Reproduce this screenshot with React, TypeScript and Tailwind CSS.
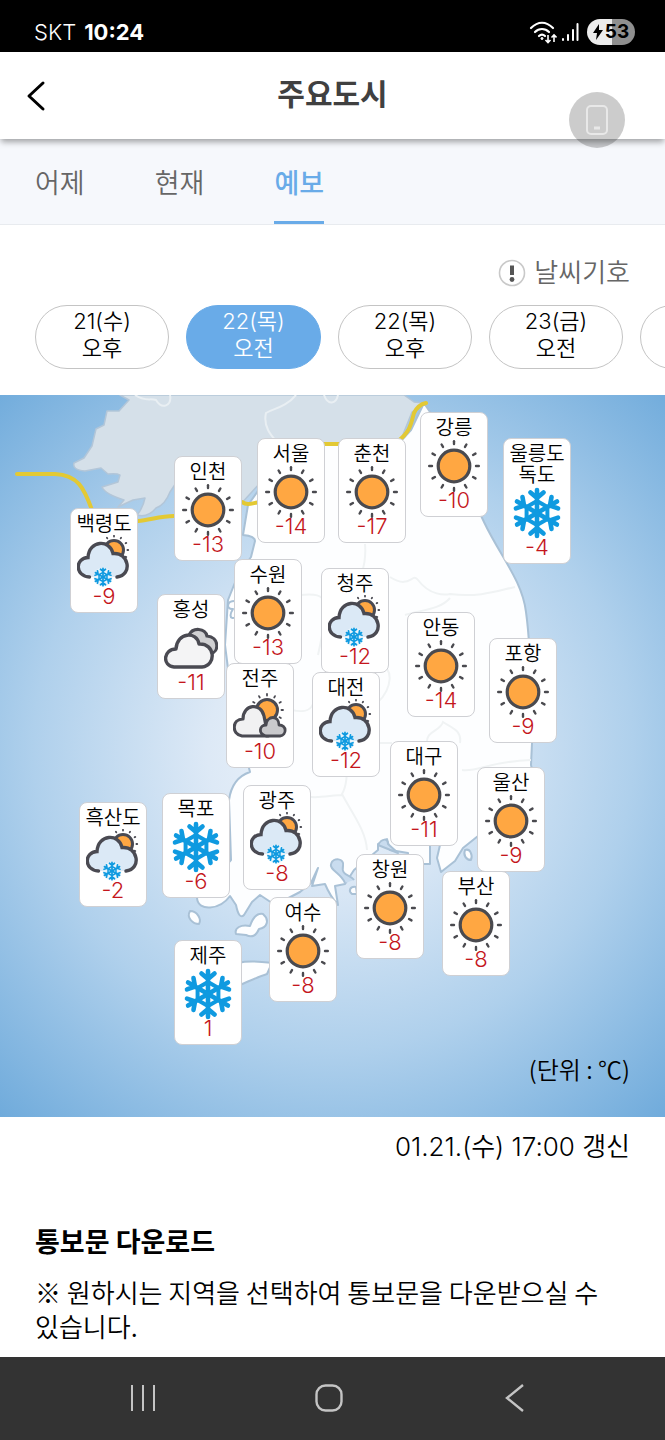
import React, { useState } from "react";

type Weather = "sun" | "snow" | "cloudSnow" | "cloudy" | "partly";

interface City {
  name: string[];
  x: number;
  y: number;
  temp: number;
  weather: Weather;
}

// x / y are measured on a 665 x 722 map
const MAP_WIDTH = 665;
const MAP_HEIGHT = 722;

const cities: City[] = [
  { name: ["인천"], x: 174, y: 61, temp: -13, weather: "sun" },
  { name: ["서울"], x: 257, y: 43, temp: -14, weather: "sun" },
  { name: ["춘천"], x: 338, y: 43, temp: -17, weather: "sun" },
  { name: ["강릉"], x: 420, y: 17, temp: -10, weather: "sun" },
  { name: ["울릉도", "독도"], x: 503, y: 43, temp: -4, weather: "snow" },
  { name: ["백령도"], x: 70, y: 113, temp: -9, weather: "cloudSnow" },
  { name: ["홍성"], x: 157, y: 199, temp: -11, weather: "cloudy" },
  { name: ["수원"], x: 234, y: 164, temp: -13, weather: "sun" },
  { name: ["청주"], x: 321, y: 173, temp: -12, weather: "cloudSnow" },
  { name: ["안동"], x: 407, y: 217, temp: -14, weather: "sun" },
  { name: ["포항"], x: 489, y: 243, temp: -9, weather: "sun" },
  { name: ["전주"], x: 226, y: 268, temp: -10, weather: "partly" },
  { name: ["대전"], x: 312, y: 277, temp: -12, weather: "cloudSnow" },
  { name: ["대구"], x: 390, y: 346, temp: -11, weather: "sun" },
  { name: ["울산"], x: 477, y: 372, temp: -9, weather: "sun" },
  { name: ["흑산도"], x: 79, y: 407, temp: -2, weather: "cloudSnow" },
  { name: ["목포"], x: 162, y: 398, temp: -6, weather: "snow" },
  { name: ["광주"], x: 243, y: 390, temp: -8, weather: "cloudSnow" },
  { name: ["창원"], x: 356, y: 459, temp: -8, weather: "sun" },
  { name: ["부산"], x: 442, y: 476, temp: -8, weather: "sun" },
  { name: ["여수"], x: 269, y: 502, temp: -8, weather: "sun" },
  { name: ["제주"], x: 174, y: 545, temp: 1, weather: "snow" },
];

const tabs = ["어제", "현재", "예보"];

// the last one is still scrolled out of view
const periods = [
  ["21(수)", "오후"],
  ["22(목)", "오전"],
  ["22(목)", "오후"],
  ["23(금)", "오전"],
  ["", ""],
];

const rays = [0, 30, 60, 90, 120, 150, 180, 210, 240, 270, 300, 330];
const arms = [0, 60, 120, 180, 240, 300];

function Flake() {
  return (
    <g stroke="#0f9ae0" strokeWidth="4.6" strokeLinecap="round" strokeLinejoin="round" fill="none">
      {arms.map((a) => (
        <path key={a} d="M0 0V-23M-6.5 -20.5L0 -15L6.5 -20.5" transform={`rotate(${a})`} />
      ))}
      <path d="M0 -12L10.4 -6V6L0 12L-10.4 6V-6Z" strokeWidth="4" />
    </g>
  );
}

function SunSmall() {
  return (
    <g>
      <circle cx="38" cy="15" r="9.5" fill="#ffa742" stroke="#4a4a52" strokeWidth="3" />
      <g stroke="#4a4a52" strokeWidth="1.8" strokeLinecap="round">
        {rays.map((a) => (
          <path key={a} d="M38 1.6V0.8" transform={`rotate(${a} 38 15)`} />
        ))}
      </g>
    </g>
  );
}

function WeatherIcon({ type }: { type: Weather }) {
  if (type === "sun") {
    return (
      <svg viewBox="0 0 54 54" className="size-[54px]" aria-hidden="true">
        <circle cx="27" cy="27" r="15.8" fill="#ffa742" stroke="#4a4a4f" strokeWidth="3.2" />
        <g stroke="#4a4a4f" strokeWidth="2.4" strokeLinecap="round">
          {rays.map((a) => (
            <path key={a} d="M27 5V2.2" transform={`rotate(${a} 27 27)`} />
          ))}
        </g>
      </svg>
    );
  }
  if (type === "snow") {
    return (
      <svg viewBox="-27 -27 54 54" className="size-[54px]" aria-hidden="true">
        <Flake />
      </svg>
    );
  }
  if (type === "cloudSnow") {
    return (
      <svg viewBox="1 0 54 54" className="size-[54px]" aria-hidden="true">
        <SunSmall />
        <path
          d="M14 42C-1 41 -1 22.5 12 22.5C13 5 34 4 37 18.5C53 17 57 40 41 42Z"
          fill="#dbe9f6"
        />
        <path
          d="M13.5 42C-1.5 41 -1 23 12 22.5C13 5 34 4 37 18.5C53 17 57 40 41 42"
          fill="none"
          stroke="#4a4a52"
          strokeWidth="3.4"
          strokeLinecap="round"
        />
        <g transform="translate(27 42) scale(.38)">
          <circle r="25" fill="#e9f4fb" />
          <Flake />
        </g>
      </svg>
    );
  }
  if (type === "cloudy") {
    return (
      <svg viewBox="0 -1 54 54" className="size-[54px]" aria-hidden="true">
        <path
          d="M25 13C29 5 41 6 43 14C55 15 56 30 46 32L30 30Z"
          fill="#d0d0d2"
          stroke="#4a4a52"
          strokeWidth="3.2"
        />
        <path
          d="M10 45C-2 44 -1 27 12 27C13 10 33 9 35 22C51 21 53 43 38 45Z"
          fill="#f4f4f5"
          stroke="#4a4a52"
          strokeWidth="3.4"
          strokeLinejoin="round"
        />
      </svg>
    );
  }
  return (
    <svg viewBox="0 -1 54 54" className="size-[54px]" aria-hidden="true">
      <circle cx="34" cy="19" r="10.5" fill="#ffa742" stroke="#4a4a52" strokeWidth="3" />
      <g stroke="#4a4a52" strokeWidth="1.8" strokeLinecap="round">
        {rays.map((a) => (
          <path key={a} d="M34 4.5V3" transform={`rotate(${a} 34 19)`} />
        ))}
      </g>
      <path
        d="M9 45C-2 43 -1 28 10 28C10 13 28 11 31 25L35 45Z"
        fill="#f1f1f2"
        stroke="#4a4a52"
        strokeWidth="3.2"
        strokeLinejoin="round"
      />
      <path
        d="M33 45C25 43 26 34 33 34C34 24 46 24 46 34C54 34 54 44 47 45Z"
        fill="#c9c9cc"
        stroke="#4a4a52"
        strokeWidth="2.8"
        strokeLinejoin="round"
      />
    </svg>
  );
}

function CityCard({ city }: { city: City }) {
  return (
    <li
      className="absolute flex w-[68px] flex-col items-center rounded-lg border border-[#cfd0d4] bg-white pt-[5px] pb-[5px]"
      style={{
        left: `${(city.x / MAP_WIDTH) * 100}%`,
        top: `${(city.y / MAP_HEIGHT) * 100}%`,
      }}
    >
      {city.name.map((line) => (
        <span key={line} className="text-[20px] leading-[21px] whitespace-nowrap text-black">
          {line}
        </span>
      ))}
      <WeatherIcon type={city.weather} />
      <span className="-mt-1 text-[22px] leading-[22px] text-[#c4161c]">{city.temp}</span>
    </li>
  );
}

function KoreaMap() {
  return (
    <svg
      viewBox="0 395 665 722"
      preserveAspectRatio="none"
      className="absolute inset-0 h-full w-full"
      aria-hidden="true"
    >
      <defs>
        <radialGradient id="sea" gradientUnits="userSpaceOnUse" cx="333" cy="750" r="500">
          <stop offset="0" stopColor="#eef5fb" />
          <stop offset="0.25" stopColor="#dde9f6" />
          <stop offset="0.6" stopColor="#afd0ec" />
          <stop offset="1" stopColor="#6eaadb" />
        </radialGradient>
      </defs>
      <rect y="395" width="665" height="722" fill="url(#sea)" />
      {/* north */}
      <path
        d="M120 395L129 400L119 411L107 411L104 425L96 429L92 446L84 458L74 463Q72 470 85 471L101 468L108 474Q117 473 120 475L118 482L102 487Q105 494 124 500L118 507L133 500L145 498Q143 508 137 515Q148 518 156 508Q165 505 170 492L178 480L240 505L290 450L400 442L412 412L424 403L414 402L404 395Z"
        fill="#d5e0e9"
        stroke="#b3c6d8"
        strokeWidth="1.5"
        strokeLinejoin="round"
      />
      <path
        d="M135 395C145 402 150 398 156 400C162 410 172 406 170 395M296 395C285 408 274 408 266 413C262 430 276 440 282 448M324 395C328 406 336 404 338 395"
        fill="none"
        stroke="#e9eff3"
        strokeWidth="2"
      />
      {/* south */}
      <path
        d="M424 403L411 430L400 442L290 446L248 505L243 535Q255 536 255 541L251 557L238 575L228 600L225 645L232 700L250 772Q232 778 229 800L231 860L197 898C198 912 220 910 230 896L236 905Q239 920 244 915L252 902L260 895L275 905L300 892L311 883L318 868L312 886L325 884Q330 896 338 905L335 886L345 884L354 870L378 850V844L387 839L390 850L408 853V864H430V845H440L437 858L441 872L455 861L463 848L478 836L540 800L531 765L534 700C529 660 530 640 526 612C522 580 500 556 484 522L455 460L432 415Z"
        fill="#fdfeff"
        stroke="#a9c1d6"
        strokeWidth="2"
        strokeLinejoin="round"
      />
      <path
        d="M345 883C341 873 329 870 331 864C333 857 345 858 343 866C341 876 350 874 354 880M378 845C382 838 388 838 388 844L398 853Z"
        fill="#c9dcef"
        stroke="#a9c1d6"
        strokeWidth="2"
        strokeLinejoin="round"
      />
      <path
        d="M390 577C410 590 412 572 418 580C430 596 445 595 450 594C480 598 500 590 515 587M450 598C440 610 420 610 405 615M365 544C366 556 364 566 362 572M427 745C425 730 440 732 443 722C452 728 462 730 460 743M372 743H392M348 742C345 760 350 780 342 794C350 810 366 830 367 850M462 770C480 772 485 762 531 760M300 595C330 592 330 600 318 655M378 665C395 665 392 690 378 702M292 710C300 712 310 712 313 704M300 795C315 800 330 795 343 795"
        fill="none"
        stroke="#f0f3f4"
        strokeWidth="2"
      />
      <g fill="#fdfeff" stroke="#a9c1d6" strokeWidth="2" strokeLinejoin="round">
        <path d="M236 601C226 600 226 610 233 609C226 620 236 620 237 614" />
        <path d="M190 911C197 911 202 919 199 924C193 924 186 918 190 911Z" />
        <path d="M236 934C234 928 241 924 250 926C253 917 257 913 263 914C270 920 267 928 259 929C256 936 252 938 246 935Z" />
        <path d="M238 963C250 960 264 962 272 963L267 974Q258 977 238 986Z" />
        <path d="M465 850C470 848 473 855 471 860C466 860 463 855 465 850Z" />
        <path d="M356 887C350 886 348 891 352 894H357Z" />
      </g>
      <path
        d="M17 474H55C78 475 84 488 92 510M138 521C150 520 160 516 174 516M242 502C248 506 252 503 260 502M322 444H340M398 441C410 432 411 424 414 413C417 407 421 404 426 403"
        fill="none"
        stroke="#e3c934"
        strokeWidth="4"
        strokeLinecap="round"
      />
    </svg>
  );
}

export default function App() {
  const [tab, setTab] = useState("예보");
  const [period, setPeriod] = useState(1);

  return (
    <div className="w-full overflow-hidden bg-white font-['Inter','Noto_Sans_CJK_KR',sans-serif] font-[350]">
      {/* Status bar */}
      <div className="flex h-[52px] items-center justify-between bg-black pt-3 pr-[30px] pl-[34px] text-white">
        <div className="flex gap-2 text-[22px] leading-7">
          <span>SKT</span>
          <span className="font-bold">10:24</span>
        </div>
        <div className="flex items-center gap-1">
          <svg viewBox="0 0 28 24" className="h-6 w-7" fill="none" stroke="white" strokeWidth="2.2" aria-hidden="true">
            <path d="M2 8C9 1 17 1 24 8M6 12C10 8 16 8 20 12M10 16C12 14 14 14 16 16" strokeLinecap="round" />
            <circle cx="13" cy="18.5" r="1" fill="white" strokeWidth="1" />
            <path d="M19 15V22M16.5 20L19 22.5L21.5 20M25 22V15M22.5 17.5L25 15L27.5 17.5" strokeWidth="1.6" />
          </svg>
          <svg viewBox="0 0 18 20" className="h-5 w-[18px]" stroke="white" strokeWidth="2" strokeLinecap="round" aria-hidden="true">
            <path d="M2 18V17M7 18V13M12 18V8M16.5 18V2" />
          </svg>
          <div className="ml-1 flex h-[26px] w-12 items-center justify-center rounded-full bg-linear-to-r from-[#ececec] from-52% to-[#8f8f8f] to-52% text-black">
            <svg viewBox="0 0 10 16" className="h-4 w-[10px]" aria-hidden="true">
              <path d="M6 0L0 9H4L3 16L10 6H6Z" />
            </svg>
            <span className="ml-[2px] text-[19px] leading-6 font-bold">53</span>
          </div>
        </div>
      </div>

      {/* Header */}
      <header className="relative z-10 flex h-[87px] items-center bg-white px-6 shadow-[0_4px_6px_-1px_rgba(0,0,0,0.35)]">
        <button type="button" aria-label="뒤로" className="flex w-6 items-center">
          <svg viewBox="0 0 24 32" className="h-8 w-6" fill="none" stroke="black" strokeWidth="3" strokeLinecap="round" strokeLinejoin="round">
            <path d="M19 3L5 16L19 29" />
          </svg>
        </button>
        <h1 className="flex-1 pr-6 pb-1 text-center text-[30px] leading-10 font-bold text-[#404040]">주요도시</h1>
        <button
          type="button"
          aria-label="화면 회전"
          className="absolute top-10 right-10 flex size-14 items-center justify-center rounded-full bg-black/20"
        >
          <svg viewBox="0 0 24 32" className="h-8 w-6" fill="none" stroke="#e8e8e8" strokeWidth="2">
            <rect x="2" y="2" width="20" height="28" rx="4" />
            <path d="M9 24H15" strokeWidth="3" />
          </svg>
        </button>
      </header>

      {/* Tabs */}
      <nav className="flex h-[86px] gap-[70px] border-b border-[#e8ebef] bg-[#f6f8fc] px-[35px]">
        {tabs.map((name) => (
          <button
            key={name}
            type="button"
            onClick={() => setTab(name)}
            className={
              tab === name
                ? "border-b-3 border-[#69abe8] pt-2 text-[27px] leading-8 font-medium text-[#69abe8]"
                : "border-b-3 border-transparent pt-2 text-[27px] leading-8 text-[#666]"
            }
          >
            {name}
          </button>
        ))}
      </nav>

      <main>
        <div className="flex justify-end px-[35px] pt-8">
          <button type="button" className="flex items-center gap-2 text-[26px] leading-8 text-[#666]">
            <svg viewBox="0 0 28 28" className="size-7" aria-hidden="true">
              <circle cx="14" cy="14" r="12.5" fill="white" stroke="#c9c9c9" strokeWidth="1.6" />
              <path d="M14 6.5V16" stroke="#555" strokeWidth="4" />
              <circle cx="14" cy="20.5" r="2.4" fill="#555" />
            </svg>
            날씨기호
          </button>
        </div>

        {/* Forecast periods */}
        <div className="flex gap-[17px] overflow-hidden pt-4 pl-[35px]">
          {periods.map(([date, half], i) => (
            <button
              key={i}
              type="button"
              onClick={() => setPeriod(i)}
              className={
                i === period
                  ? "flex h-16 w-[135px] shrink-0 flex-col items-center justify-center rounded-full border border-[#69abe8] bg-[#69abe8] pb-1 text-[22px] leading-[27px] text-white"
                  : "flex h-16 w-[134px] shrink-0 flex-col items-center justify-center rounded-full border border-[#c4c4c4] bg-white pb-1 text-[22px] leading-[27px] text-black"
              }
            >
              <span>{date}</span>
              <span>{half}</span>
            </button>
          ))}
        </div>

        {/* Map */}
        <section className="relative mt-[26px] aspect-[665/722] w-full">
          <KoreaMap />
          <ul>
            {cities.map((city) => (
              <CityCard key={city.name[0]} city={city} />
            ))}
          </ul>
          <p className="absolute right-[35px] bottom-8 font-['Noto_Sans_CJK_KR',sans-serif] text-[24px] leading-8 text-black">
            (단위 : ℃)
          </p>
        </section>

        <p className="px-[35px] pt-[14px] text-right text-[26px] leading-8 text-black">01.21.(수) 17:00 갱신</p>

        <section className="px-[35px] pt-[62px] pb-[14px] font-['Noto_Sans_CJK_KR',sans-serif] text-black">
          <h2 className="text-[27px] leading-8 font-bold">통보문 다운로드</h2>
          <p className="pt-[18px] text-[26px] leading-[34px] break-keep">
            ※ 원하시는 지역을 선택하여 통보문을 다운받으실 수 있습니다.
          </p>
        </section>
      </main>

      {/* System navigation */}
      <footer className="flex h-[83px] items-center justify-around bg-[#333] pr-[57px] pb-[2px] pl-[50px]">
        <button type="button" aria-label="최근 앱">
          <svg viewBox="0 0 28 28" className="size-7" stroke="#c4c4c4" strokeWidth="2" aria-hidden="true">
            <path d="M3 1V27M14 1V27M25 1V27" />
          </svg>
        </button>
        <button type="button" aria-label="홈">
          <svg viewBox="0 0 28 28" className="size-7" fill="none" stroke="#c4c4c4" strokeWidth="2.4" aria-hidden="true">
            <rect x="1.5" y="1.5" width="25" height="25" rx="9" />
          </svg>
        </button>
        <button type="button" aria-label="이전">
          <svg viewBox="0 0 28 28" className="size-7" fill="none" stroke="#c4c4c4" strokeWidth="2.4" aria-hidden="true">
            <path d="M22 1L6 14L22 27" />
          </svg>
        </button>
      </footer>
    </div>
  );
}
